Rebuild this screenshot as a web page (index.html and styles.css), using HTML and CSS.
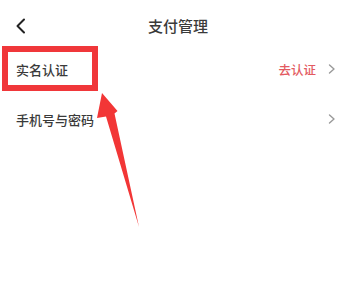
FILE: index.html
```html
<!DOCTYPE html>
<html lang="zh">
<head>
<meta charset="utf-8">
<link rel="stylesheet" href="styles.css">
</head>
<body>
<div class="page">
  <header class="topbar">
    <svg class="back" width="12" height="16" viewBox="0 0 12 16"><path d="M9 1.5 L2.5 8 L9 14.5" fill="none" stroke="#222" stroke-width="2" stroke-linecap="round" stroke-linejoin="round"/></svg>
    <h1 class="title">支付管理</h1>
  </header>
  <ul class="list">
    <li class="row">
      <span class="label">实名认证</span>
      <span class="right"><span class="action">去认证</span><svg class="chev" width="8" height="10" viewBox="0 0 8 10"><path d="M1.5 1 L6 5 L1.5 9" fill="none" stroke="#999" stroke-width="1.4" stroke-linecap="round" stroke-linejoin="round"/></svg></span>
    </li>
    <li class="row">
      <span class="label">手机号与密码</span>
      <span class="right"><svg class="chev" width="8" height="10" viewBox="0 0 8 10"><path d="M1.5 1 L6 5 L1.5 9" fill="none" stroke="#999" stroke-width="1.4" stroke-linecap="round" stroke-linejoin="round"/></svg></span>
    </li>
  </ul>
  <div class="highlight"></div>
  <svg class="arrow" width="356" height="305" viewBox="0 0 356 305"><polygon points="102,93 97,118 106,116.5 139,227 114.5,113.5 117.5,111" fill="#f23636"/></svg>
</div>
</body>
</html>
```
FILE: styles.css
```css
html, body {
  margin: 0;
  padding: 0;
  background: #fff;
}
.page {
  position: relative;
  width: 356px;
  height: 305px;
  overflow: hidden;
  font-family: "Noto Sans CJK SC", "Noto Sans", sans-serif;
  color: #333;
}
.topbar {
  position: relative;
  height: 44px;
  display: flex;
  justify-content: center;
  padding-top: 16px;
  box-sizing: border-box;
}
.back {
  position: absolute;
  left: 15px;
  top: 18px;
}
.title {
  margin: 0;
  font-size: 15px;
  line-height: 20px;
  font-weight: 500;
  color: #3a3a3a;
}
.list {
  list-style: none;
  margin: 0;
  padding: 0;
}
.row {
  height: 50px;
  display: flex;
  align-items: center;
  justify-content: space-between;
  padding: 0 20px 0 16px;
}
.label {
  font-size: 13px;
  font-weight: 500;
  color: #3a3a3a;
}
.right {
  display: flex;
  align-items: center;
  gap: 12px;
}
.action {
  font-size: 12.5px;
  font-weight: 500;
  color: #e35a61;
}
.chev {
  display: block;
}
.highlight {
  position: absolute;
  left: 2px;
  top: 46px;
  width: 96px;
  height: 45px;
  box-sizing: border-box;
  border: 6px solid #f0373a;
}
.arrow {
  position: absolute;
  left: 0;
  top: 0;
}
```
